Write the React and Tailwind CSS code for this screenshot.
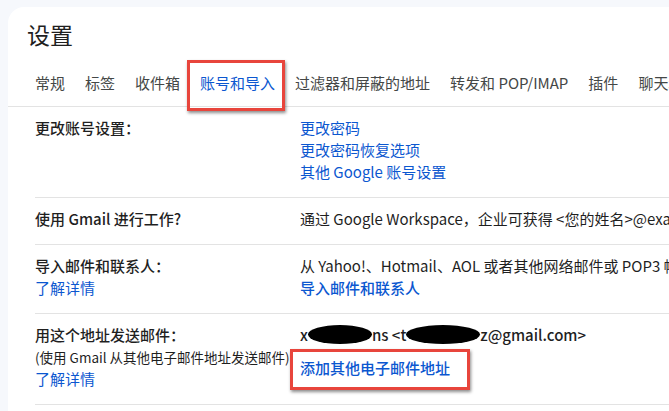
const tabs = ["常规", "标签", "收件箱", "账号和导入", "过滤器和屏蔽的地址", "转发和 POP/IMAP", "插件", "聊天和 Meet"];

function Blob({ w }) {
    return <span className={`inline-block align-middle h-[19px] bg-black rounded-[50%] -translate-y-[2px] ${w}`} />;
}

function Row({ label, children }) {
    return (
        <div className="flex border-b border-[#e3e3e3] pt-[10px] pb-[14px] leading-[22px]">
            <div className="w-[265px] shrink-0">{label}</div>
            <div className="whitespace-nowrap">{children}</div>
        </div>
    );
}

export default function App() {
    return (
        <div className="w-[669px] h-[411px] overflow-hidden bg-[#f6f8fc] pl-2 pt-[7px] text-[15px] text-[#1f1f1f]" style={{ fontFamily: '"Noto Sans CJK SC", Roboto, sans-serif' }}>
            <div className="bg-white rounded-tl-2xl w-[700px] h-[420px]">
                <h1 className="pl-[19px] pt-[11px] text-[23px] leading-8 text-[#1f1f1f]">设置</h1>
                <div className="mt-[10px] flex gap-5 pl-[27px] border-b border-[#e3e3e3] whitespace-nowrap">
                    {tabs.map((t) => (
                        <div key={t} className={`relative h-[46px] flex items-center ${t === "账号和导入" ? "text-[#0b57d0]" : "text-[#444746]"}`}>
                            {t}
                            {t === "账号和导入" && (
                                <span className="absolute left-[-13px] top-[0px] w-[98px] h-[51px] border-[3px] border-[#e8453c] shadow-[1px_2px_3px_rgba(0,0,0,0.45)]" />
                            )}
                        </div>
                    ))}
                </div>
                <div className="pl-[27px]">
                    <Row label={<span className="font-medium">更改账号设置：</span>}>
                        <div className="flex flex-col text-[#0b57d0]">
                            <span>更改密码</span>
                            <span>更改密码恢复选项</span>
                            <span>其他 Google 账号设置</span>
                        </div>
                    </Row>
                    <Row label={<span className="font-medium">使用 Gmail 进行工作?</span>}>
                        通过 Google Workspace，企业可获得 &lt;您的姓名&gt;@example.com
                    </Row>
                    <Row
                        label={
                            <div className="flex flex-col">
                                <span className="font-medium">导入邮件和联系人：</span>
                                <span className="text-[#0b57d0]">了解详情</span>
                            </div>
                        }
                    >
                        <div className="flex flex-col">
                            <span>从 Yahoo!、Hotmail、AOL 或者其他网络邮件或 POP3 帐号导入</span>
                            <span className="text-[#0b57d0] font-medium">导入邮件和联系人</span>
                        </div>
                    </Row>
                    <Row
                        label={
                            <div className="flex flex-col">
                                <span className="font-medium">用这个地址发送邮件：</span>
                                <span className="text-[13.5px] text-[#1f1f1f] whitespace-nowrap">(使用 Gmail 从其他电子邮件地址发送邮件)</span>
                                <span className="text-[#0b57d0]">了解详情</span>
                            </div>
                        }
                    >
                        <div className="flex flex-col items-start">
                            <span className="font-medium">
                                x<Blob w="w-[64px]" />ns &lt;t<Blob w="w-[74px]" />z@gmail.com&gt;
                            </span>
                            <span className="relative mt-[11px] text-[#0b57d0] font-medium">
                                添加其他电子邮件地址
                                <span className="absolute left-[-10px] top-[-8px] w-[180px] h-[41px] border-[3px] border-[#e8453c] shadow-[1px_2px_3px_rgba(0,0,0,0.45)]" />
                            </span>
                        </div>
                    </Row>
                </div>
            </div>
        </div>
    );
}
